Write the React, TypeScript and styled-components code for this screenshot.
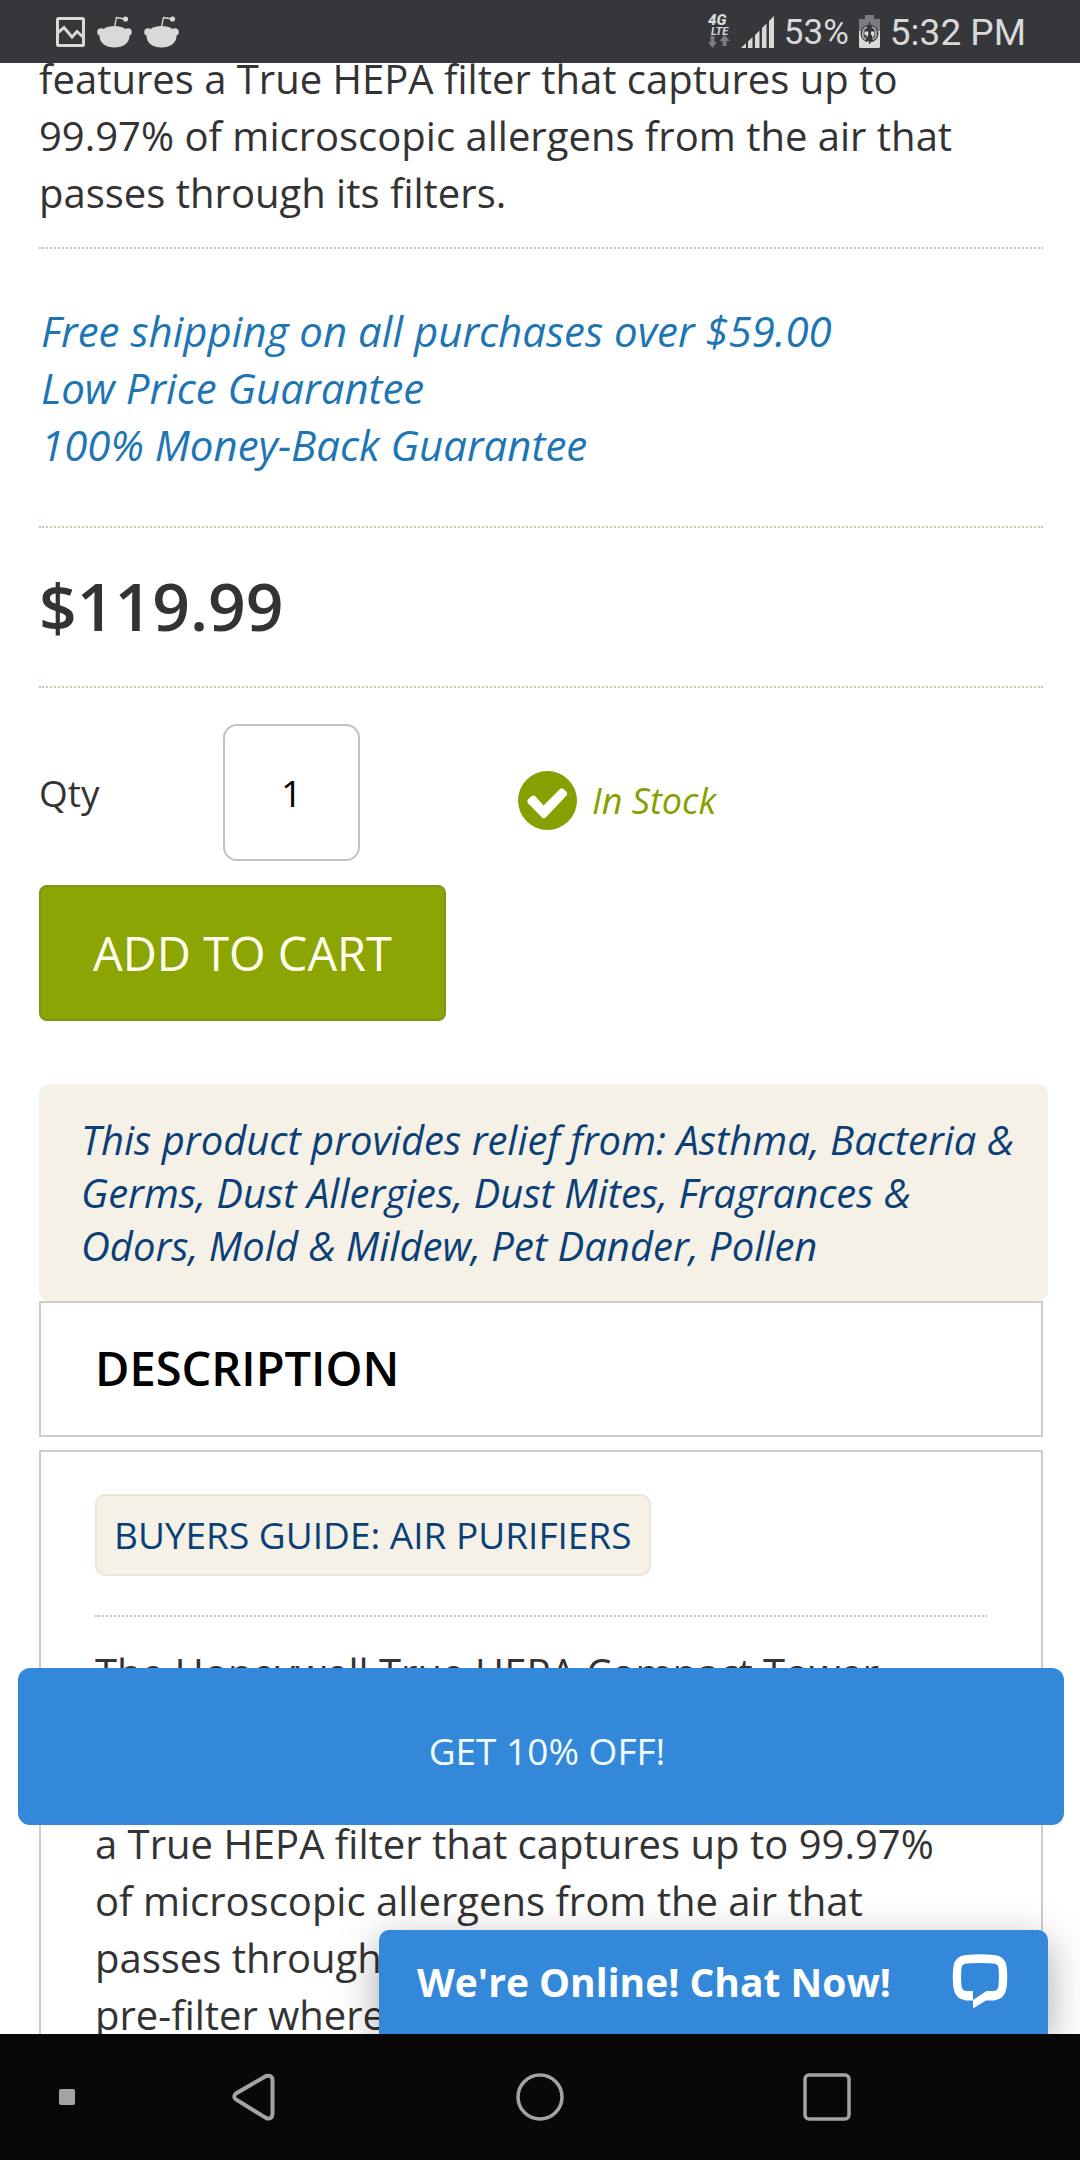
import React from "react";
import styled, { createGlobalStyle } from "styled-components";

const GlobalStyle = createGlobalStyle`
  *, *::before, *::after { box-sizing: border-box; }
  body {
    margin: 0;
    background: #fff;
    color: #333;
    font-family: "Open Sans", "Noto Sans", sans-serif;
    font-size: 40px;
    line-height: 57px;
  }
  p, h2 { margin: 0; }
  button, input { font-family: inherit; }
`;

const Screen = styled.div`
  display: flex;
  flex-direction: column;
  height: 100vh;
  overflow: hidden;
`;

const StatusBar = styled.header`
  flex: none;
  display: flex;
  align-items: center;
  justify-content: space-between;
  height: 63px;
  padding: 0 54px 0 56px;
  background: #36373b;
  color: #d9d9d9;
  font-family: Roboto, sans-serif;
  line-height: 44px;
`;

const StatusGroup = styled.div<{ $gap: number }>`
  display: flex;
  align-items: center;
  gap: ${(p) => p.$gap}px;
`;

const StatusText = styled.span<{ $size: number }>`
  padding-top: 2px;
  font-size: ${(p) => p.$size}px;
`;

const Viewport = styled.main`
  position: relative;
  flex: 1;
  min-height: 0;
  overflow: hidden;
`;

const Page = styled.div`
  margin-top: -13px;
  padding: 0 37px 0 39px;
`;

const Section = styled.section<{ $top: number; $bottom: number }>`
  padding: ${(p) => p.$top}px 0 ${(p) => p.$bottom}px;
  border-bottom: 2px dotted #c9c6b4;
`;

const Perks = styled.p`
  padding-left: 2px;
  color: #1e75b3;
  font-size: 42px;
  font-style: italic;
`;

const Price = styled.p`
  font-size: 66px;
  font-weight: 600;
  line-height: 90px;
`;

const BuyRow = styled.div`
  display: flex;
  align-items: center;
  padding-top: 36px;
`;

const QtyLabel = styled.label`
  width: 184px;
  font-size: 37px;
`;

const QtyInput = styled.input`
  width: 137px;
  height: 137px;
  padding: 0;
  border: 2px solid #c3c3c3;
  border-radius: 14px;
  background: #fff;
  color: #000;
  font-size: 37px;
  text-align: center;
`;

const Stock = styled.div`
  display: flex;
  align-items: center;
  gap: 15px;
  margin-left: 158px;
  padding-top: 16px;
  color: #85a000;
  font-size: 36px;
  font-style: italic;
`;

const CartButton = styled.button`
  display: block;
  height: 136px;
  margin-top: 24px;
  padding: 0 52px;
  border: 2px solid #7d9614;
  border-radius: 8px;
  background: #8ca502;
  color: #fffff0;
  font-size: 47px;
`;

const Relief = styled.p`
  margin: 63px -5px 0 0;
  padding: 29px 24px 29px 42px;
  border-radius: 10px;
  background: #f5f1e6;
  color: #0b3f78;
  font-size: 40px;
  font-style: italic;
  line-height: 53px;
`;

const Panel = styled.div`
  padding: 0 54px;
  border: 2px solid #cdcdcd;
`;

const PanelTitle = styled.h2`
  padding-bottom: 2px;
  color: #000;
  font-size: 47px;
  font-weight: 600;
  line-height: 130px;
`;

const PanelBody = styled(Panel)`
  margin-top: 13px;
  padding-top: 42px;
`;

const GuideLink = styled.a`
  display: inline-block;
  padding: 11px 17px;
  border: 2px solid #ebe6d6;
  border-radius: 10px;
  background: #f5f1e6;
  color: #0b3f78;
  font-size: 37px;
  line-height: 56px;
  text-decoration: none;
  vertical-align: top;
`;

const Rule = styled.hr`
  margin: 39px 0 27px;
  border: 0;
  border-top: 2px dotted #c9c6b4;
`;

const OfferButton = styled.button`
  position: absolute;
  right: 16px;
  bottom: 209px;
  left: 18px;
  height: 157px;
  padding: 8px 0 0 12px;
  border: 0;
  border-radius: 12px;
  background: #3388da;
  color: #f2fbff;
  font-size: 37px;
`;

const ChatButton = styled.button`
  position: absolute;
  right: 32px;
  bottom: 0;
  display: flex;
  align-items: center;
  gap: 61px;
  height: 104px;
  padding: 0 40px 2px 38px;
  border: 0;
  border-radius: 10px 10px 0 0;
  background: #3388da;
  box-shadow: 0 12px 42px rgba(0, 0, 0, 0.35);
  color: #fff;
  font-size: 39px;
  font-weight: 700;
`;

const NavBar = styled.nav`
  flex: none;
  display: grid;
  grid-template-columns: 110px 1fr 1fr 1fr 110px;
  align-items: center;
  height: 126px;
  background: #080808;
`;

const NavButton = styled.button`
  display: flex;
  justify-content: center;
  padding: 0;
  border: 0;
  background: none;
`;

const PictureIcon = () => (
  <svg width="29" height="30" viewBox="0 0 29 30" fill="none" stroke="#d9d9d9">
    <rect x="1.5" y="1.5" width="26" height="27" rx="1" strokeWidth="3" />
    <path d="M2 15.500L8 10.500L16 20L21 14.500L27 20" strokeWidth="3" />
  </svg>
);

const AlienIcon = () => (
  <svg width="35" height="32" viewBox="0 0 35 32" fill="#d9d9d9">
    <path d="M17.500 11L19.500 1.500L28 3" fill="none" stroke="#d9d9d9" strokeWidth="1.300" />
    <circle cx="28.500" cy="3" r="2.600" />
    <circle cx="4" cy="16" r="3.800" />
    <circle cx="31" cy="16" r="3.800" />
    <path d="M17.500 10C26 10 32.500 14 32.500 20C32.500 27 26 31.500 17.500 31.500S2.500 27 2.500 20C2.500 14 9 10 17.500 10Z" />
  </svg>
);

const NetworkIcon = () => (
  <svg width="24" height="35" viewBox="0 0 24 35" fill="#d9d9d9" fontFamily="Roboto, sans-serif" fontStyle="italic" fontWeight="900">
    <text x="1" y="11" fontSize="15">4G</text>
    <text x="4" y="21" fontSize="11" fontWeight="700">LTE</text>
    <path fill="#7b7c80" d="M3.500 22h4v6H10l-4.500 6L1 28h2.500zM15.500 32h4v-5H23l-5.500-6-5 6h3z" />
  </svg>
);

const SignalIcon = () => (
  <svg width="33" height="32" viewBox="0 0 33 32" fill="#d9d9d9">
    <path d="M0 32L5 27V32ZM7 25.500L11.500 21V32H7ZM14 19L18.500 14.500V32H14ZM21 12L25.500 7.500V32H21ZM28 5L33 0V32H28Z" />
  </svg>
);

const BatteryIcon = () => (
  <svg width="21" height="34" viewBox="0 0 21 34">
    <path fill="#7b7c80" d="M6 0H15V4H21V17H0V4H6Z" />
    <path fill="#d9d9d9" d="M0 16H21V32L20 33H1L0 32Z" />
    <circle cx="10.500" cy="18.500" r="9" fill="#36373b" />
    <path fill="none" stroke="#aaabad" strokeWidth="1.800" d="M8 12C2.500 14 2.500 22.500 7 24.500M13 12C18.500 14 18.500 22.500 13.500 24.500" />
    <path fill="#d9d9d9" d="M5.500 16.500h3.800v3.500L7.500 23v-3h-2zM12 16.500h3.500v3.500L13 23v-3h-1z" />
    <path fill="#d9d9d9" d="M8.500 26h1.300v5H8.500z" />
    <path fill="#36373b" d="M10 7h1.200v22H10z" />
  </svg>
);

const CheckIcon = () => (
  <svg width="59" height="59" viewBox="0 0 59 59">
    <circle cx="29.500" cy="29.500" r="29.500" fill="#85a000" />
    <path d="M9.800 28.500Q8.500 30.500 10 32.300L24 46.500Q26 48.300 28 46.300L48.500 24.500Q50 22.500 48.500 20.800L45.500 18Q43.500 16.500 41.800 18.300L25.500 34.500L17.500 25.500Q15.500 23.800 13.700 25Z" fill="#fff" />
  </svg>
);

const ChatIcon = () => (
  <svg width="56" height="55" viewBox="0 0 56 55">
    <path
      fill="#fff"
      fillRule="evenodd"
      d="M14 1Q28-0.500 42 1Q53 2 54.500 12Q56 23 54.500 34Q53 45 42 46.500H34L21 54.500V46.500H14Q3 45 1.500 34Q0 23 1.500 12Q3 2 14 1ZM14 9.500Q10 10 9.500 14Q8.700 23 9.500 32Q10 36.500 14 37H21V46L34.500 37H42Q46 36.500 46.500 32Q47.300 23 46.500 14Q46 10 42 9.500Q28 8.500 14 9.500Z"
    />
  </svg>
);

export default function App() {
  return (
    <Screen>
      <GlobalStyle />
      <StatusBar>
        <StatusGroup $gap={12}>
          <PictureIcon />
          <AlienIcon />
          <AlienIcon />
        </StatusGroup>
        <StatusGroup $gap={10}>
          <NetworkIcon />
          <SignalIcon />
          <StatusText $size={35}>53%</StatusText>
          <BatteryIcon />
          <StatusText $size={37}>5:32 PM</StatusText>
        </StatusGroup>
      </StatusBar>

      <Viewport>
        <Page>
          <Section $top={0} $bottom={26}>
            <p>
              features a True HEPA filter that captures up to
              <br />
              99.97% of microscopic allergens from the air that
              <br />
              passes through its filters.
            </p>
          </Section>
          <Section $top={53} $bottom={53}>
            <Perks>
              Free shipping on all purchases over $59.00
              <br />
              Low Price Guarantee
              <br />
              100% Money-Back Guarantee
            </Perks>
          </Section>
          <Section $top={32} $bottom={36}>
            <Price>$119.99</Price>
          </Section>

          <BuyRow>
            <QtyLabel htmlFor="qty">Qty</QtyLabel>
            <QtyInput id="qty" type="text" inputMode="numeric" defaultValue="1" />
            <Stock>
              <CheckIcon />
              <span>In Stock</span>
            </Stock>
          </BuyRow>
          <CartButton type="button">ADD TO CART</CartButton>

          <Relief>
            This product provides relief from: Asthma, Bacteria &amp;
            <br />
            Germs, Dust Allergies, Dust Mites, Fragrances &amp;
            <br />
            Odors, Mold &amp; Mildew, Pet Dander, Pollen
          </Relief>

          <Panel>
            <PanelTitle>DESCRIPTION</PanelTitle>
          </Panel>
          <PanelBody>
            <GuideLink href="#guide">BUYERS GUIDE: AIR PURIFIERS</GuideLink>
            <Rule />
            <p>
              The Honeywell True HEPA Compact Tower
              <br />
              Allergen Remover helps to clean the
              <br />
              air in medium-sized rooms and features
              <br />
              a True HEPA filter that captures up to 99.97%
              <br />
              of microscopic allergens from the air that
              <br />
              passes through
              <br />
              pre-filter where
            </p>
          </PanelBody>
        </Page>

        <OfferButton type="button">GET 10% OFF!</OfferButton>
        <ChatButton type="button">
          <span>We're Online! Chat Now!</span>
          <ChatIcon />
        </ChatButton>
      </Viewport>

      <NavBar>
        <NavButton type="button" aria-label="Hide bar">
          <svg width="40" height="16" viewBox="0 0 40 16">
            <rect x="24" width="16" height="16" rx="2" fill="#a3a3a3" />
          </svg>
        </NavButton>
        <NavButton type="button" aria-label="Back">
          <svg width="43" height="48" viewBox="0 0 43 48" fill="none" stroke="#a3a3a3" strokeWidth="4">
            <path d="M34 3L4 20.500Q0.500 23.500 4 26.500L34 45Q40 47 40.500 41V7Q40 1.500 34 3Z" />
          </svg>
        </NavButton>
        <NavButton type="button" aria-label="Home">
          <svg width="48" height="48" viewBox="0 0 48 48" fill="none" stroke="#a3a3a3" strokeWidth="3.500">
            <circle cx="24" cy="24" r="22" />
          </svg>
        </NavButton>
        <NavButton type="button" aria-label="Recent apps">
          <svg width="48" height="48" viewBox="0 0 48 48" fill="none" stroke="#a3a3a3" strokeWidth="3.500">
            <rect x="2" y="2" width="44" height="44" rx="4" />
          </svg>
        </NavButton>
      </NavBar>
    </Screen>
  );
}
